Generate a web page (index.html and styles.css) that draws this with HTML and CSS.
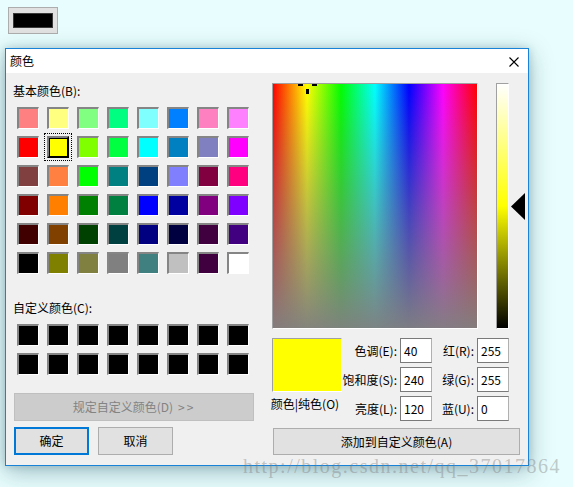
FILE: index.html
```html
<!DOCTYPE html>
<html lang="zh-CN">
<head>
<meta charset="utf-8">
<title>颜色</title>
<link rel="stylesheet" href="styles.css">
</head>
<body>
<div class="desk-btn"><span class="desk-swatch"></span></div>

<div class="dialog">
  <div class="titlebar">
    <span class="title">颜色</span>
    <svg class="close" width="10" height="10" viewBox="0 0 10 10"><path d="M0.5 0.5 L9.5 9.5 M9.5 0.5 L0.5 9.5" stroke="#000" stroke-width="1.1" fill="none"/></svg>
  </div>
  <div class="content">
    <div class="left">
      <div class="label">基本颜色(B):</div>
      <div class="swatches basic">
        <span class="sw" style="background:#ff8080"></span>
        <span class="sw" style="background:#ffff80"></span>
        <span class="sw" style="background:#80ff80"></span>
        <span class="sw" style="background:#00ff80"></span>
        <span class="sw" style="background:#80ffff"></span>
        <span class="sw" style="background:#0080ff"></span>
        <span class="sw" style="background:#ff80c0"></span>
        <span class="sw" style="background:#ff80ff"></span>

        <span class="sw" style="background:#ff0000"></span>
        <span class="sw sel" style="background:#ffff00"></span>
        <span class="sw" style="background:#80ff00"></span>
        <span class="sw" style="background:#00ff40"></span>
        <span class="sw" style="background:#00ffff"></span>
        <span class="sw" style="background:#0080c0"></span>
        <span class="sw" style="background:#8080c0"></span>
        <span class="sw" style="background:#ff00ff"></span>

        <span class="sw" style="background:#804040"></span>
        <span class="sw" style="background:#ff8040"></span>
        <span class="sw" style="background:#00ff00"></span>
        <span class="sw" style="background:#008080"></span>
        <span class="sw" style="background:#004080"></span>
        <span class="sw" style="background:#8080ff"></span>
        <span class="sw" style="background:#800040"></span>
        <span class="sw" style="background:#ff0080"></span>

        <span class="sw" style="background:#800000"></span>
        <span class="sw" style="background:#ff8000"></span>
        <span class="sw" style="background:#008000"></span>
        <span class="sw" style="background:#008040"></span>
        <span class="sw" style="background:#0000ff"></span>
        <span class="sw" style="background:#0000a0"></span>
        <span class="sw" style="background:#800080"></span>
        <span class="sw" style="background:#8000ff"></span>

        <span class="sw" style="background:#400000"></span>
        <span class="sw" style="background:#804000"></span>
        <span class="sw" style="background:#004000"></span>
        <span class="sw" style="background:#004040"></span>
        <span class="sw" style="background:#000080"></span>
        <span class="sw" style="background:#000040"></span>
        <span class="sw" style="background:#400040"></span>
        <span class="sw" style="background:#400080"></span>

        <span class="sw" style="background:#000000"></span>
        <span class="sw" style="background:#808000"></span>
        <span class="sw" style="background:#808040"></span>
        <span class="sw" style="background:#808080"></span>
        <span class="sw" style="background:#408080"></span>
        <span class="sw" style="background:#c0c0c0"></span>
        <span class="sw" style="background:#400040"></span>
        <span class="sw" style="background:#ffffff"></span>
      </div>

      <div class="label custom-label">自定义颜色(C):</div>
      <div class="swatches custom">
        <span class="sw blk"></span><span class="sw blk"></span><span class="sw blk"></span><span class="sw blk"></span>
        <span class="sw blk"></span><span class="sw blk"></span><span class="sw blk"></span><span class="sw blk"></span>
        <span class="sw blk"></span><span class="sw blk"></span><span class="sw blk"></span><span class="sw blk"></span>
        <span class="sw blk"></span><span class="sw blk"></span><span class="sw blk"></span><span class="sw blk"></span>
      </div>

      <button class="btn define" disabled>规定自定义颜色(D) <span class="gt">&gt;&gt;</span></button>
      <div class="actions">
        <button class="btn ok">确定</button>
        <button class="btn cancel">取消</button>
      </div>
    </div>

    <div class="right">
      <div class="pick-row">
        <div class="spectrum">
          <svg class="cross" width="20" height="11" viewBox="0 0 20 11">
            <rect x="0" y="0" width="5" height="2" fill="#000"/>
            <rect x="14" y="0" width="5" height="2" fill="#000"/>
            <rect x="8" y="5" width="3" height="5" fill="#000"/>
          </svg>
        </div>
        <div class="lum"></div>
        <svg class="arrow" width="14" height="27" viewBox="0 0 14 27"><path d="M0 13.5 L14 0 L14 27 Z" fill="#000"/></svg>
      </div>

      <div class="values">
        <div class="preview-block">
          <div class="preview"></div>
          <div class="preview-label">颜色|纯色(O)</div>
        </div>
        <div class="fields">
          <label class="flabel">色调(E):</label><div class="field">40</div>
          <label class="flabel">红(R):</label><div class="field">255</div>
          <label class="flabel">饱和度(S):</label><div class="field">240</div>
          <label class="flabel">绿(G):</label><div class="field">255</div>
          <label class="flabel">亮度(L):</label><div class="field">120</div>
          <label class="flabel">蓝(U):</label><div class="field">0</div>
        </div>
      </div>

      <button class="btn add">添加到自定义颜色(A)</button>
    </div>
  </div>
</div>

<div class="watermark">http://blog.csdn.net/qq_37017864</div>
</body>
</html>
```

FILE: styles.css
```css
* { box-sizing: border-box; }

html, body {
  margin: 0;
  padding: 0;
}

body {
  width: 573px;
  height: 487px;
  overflow: hidden;
  background: #e8fdfd;
  font-family: "Noto Sans CJK SC", "Noto Sans", sans-serif;
  font-size: 12px;
  color: #000;
  position: relative;
}

.desk-btn {
  margin: 7px 0 0 8px;
  width: 50px;
  height: 27px;
  border: 1px solid #adadad;
  background: #e1e1e1;
  display: flex;
  align-items: center;
  justify-content: center;
}

.desk-swatch {
  width: 40px;
  height: 15px;
  background: #000;
  border: 1px solid #3a3a3a;
}

.dialog {
  margin: 14px 0 0 5px;
  width: 524px;
  height: 418px;
  border: 1px solid #1883d7;
  background: #f0f0f0;
  box-shadow: 0 6px 22px rgba(20, 70, 90, 0.35), 0 0 8px rgba(20, 70, 90, 0.2);
  display: flex;
  flex-direction: column;
}

.titlebar {
  height: 24px;
  background: #fff;
  display: flex;
  align-items: center;
  justify-content: space-between;
  padding: 0 9px 0 4px;
  flex: none;
}

.title {
  line-height: 16px;
}

.close {
  display: block;
  margin-top: 1px;
}

.content {
  display: flex;
  gap: 18px;
  padding: 10px 0 0 8px;
}

.left {
  width: 240px;
  display: flex;
  flex-direction: column;
}

.label {
  line-height: 16px;
  height: 16px;
  margin-left: -1px;
}

.swatches {
  display: grid;
  grid-template-columns: repeat(8, 22px);
  column-gap: 8px;
  row-gap: 7px;
  padding-left: 3px;
  margin-top: 8px;
}

.sw {
  display: block;
  width: 22px;
  height: 22px;
  border-style: solid;
  border-width: 2px 1px 1px 2px;
  border-color: #858585 #ffffff #ffffff #858585;
}

.sw.sel {
  border-width: 2px;
  border-color: #808080 #000 #000 #808080;
  box-shadow: inset 1px 1px 0 #000;
  outline: 1px dotted #000;
  outline-offset: 2px;
}

.sw.blk {
  background: #000;
}

.custom-label {
  margin-top: 26px;
}

.btn {
  font-family: inherit;
  font-size: 12px;
  color: #000;
  background: #e1e1e1;
  border: 1px solid #adadad;
  padding: 0;
  margin: 0;
  display: flex;
  align-items: center;
  justify-content: center;
  line-height: 16px;
}

.define {
  margin-top: 18px;
  width: 240px;
  height: 28px;
  background: #cccccc;
  border-color: #bfbfbf;
  color: #838383;
}

.gt {
  letter-spacing: 2px;
  margin-left: 5px;
}

.actions {
  display: flex;
  gap: 9px;
  margin-top: 6px;
}

.ok, .cancel {
  width: 75px;
  height: 28px;
}

.ok {
  border: 2px solid #0078d7;
}

.right {
  width: 255px;
  display: flex;
  flex-direction: column;
}

.pick-row {
  display: flex;
  align-items: flex-start;
}

.spectrum {
  position: relative;
  width: 206px;
  height: 246px;
  border-style: solid;
  border-width: 1px;
  border-color: #a0a0a0 #ffffff #ffffff #a0a0a0;
  background:
    linear-gradient(to bottom, rgba(128, 128, 128, 0) 0%, rgba(128, 128, 128, 0.55) 55%, rgba(128, 128, 128, 0.97) 100%),
    linear-gradient(to right, #ff0000 0%, #ffff00 16.67%, #00ff00 33.33%, #00ffff 50%, #0000ff 66.67%, #ff00ff 83.33%, #ff0000 100%);
}

.cross {
  position: absolute;
  left: 25px;
  top: 0;
  display: block;
}

.lum {
  margin-left: 18px;
  width: 13px;
  height: 246px;
  border-style: solid;
  border-width: 1px;
  border-color: #a0a0a0 #ffffff #ffffff #a0a0a0;
  background: linear-gradient(to bottom, #ffffff 0%, #ffff00 50%, #000000 100%);
}

.arrow {
  display: block;
  margin-left: 2px;
  margin-top: 110px;
}

.values {
  display: flex;
  margin-top: 9px;
}

.preview-block {
  width: 70px;
  display: flex;
  flex-direction: column;
  align-items: center;
}

.preview {
  width: 70px;
  height: 54px;
  background: #ffff00;
  border-style: solid;
  border-width: 1px;
  border-color: #a0a0a0 #ffffff #ffffff #a0a0a0;
}

.preview-label {
  margin-top: 4px;
  line-height: 16px;
  white-space: nowrap;
  margin-left: -4px;
}

.fields {
  display: grid;
  grid-template-columns: 58px 32px 45px 32px;
  grid-auto-rows: 25px;
  row-gap: 4px;
}

.flabel {
  display: flex;
  align-items: center;
  justify-content: flex-end;
  padding-right: 3px;
  white-space: nowrap;
  line-height: 16px;
}

.field {
  background: #fff;
  border: 1px solid #7a7a7a;
  border-right-color: #b0b0b0;
  display: flex;
  align-items: center;
  padding-left: 3px;
  line-height: 16px;
}

.add {
  margin-top: 7px;
  margin-left: 1px;
  width: 247px;
  height: 27px;
}

.watermark {
  position: absolute;
  left: 243px;
  top: 456px;
  font-family: "Liberation Serif", serif;
  font-size: 20px;
  line-height: 20px;
  letter-spacing: 1.5px;
  color: rgba(120, 120, 120, 0.4);
  white-space: nowrap;
  pointer-events: none;
}
```
